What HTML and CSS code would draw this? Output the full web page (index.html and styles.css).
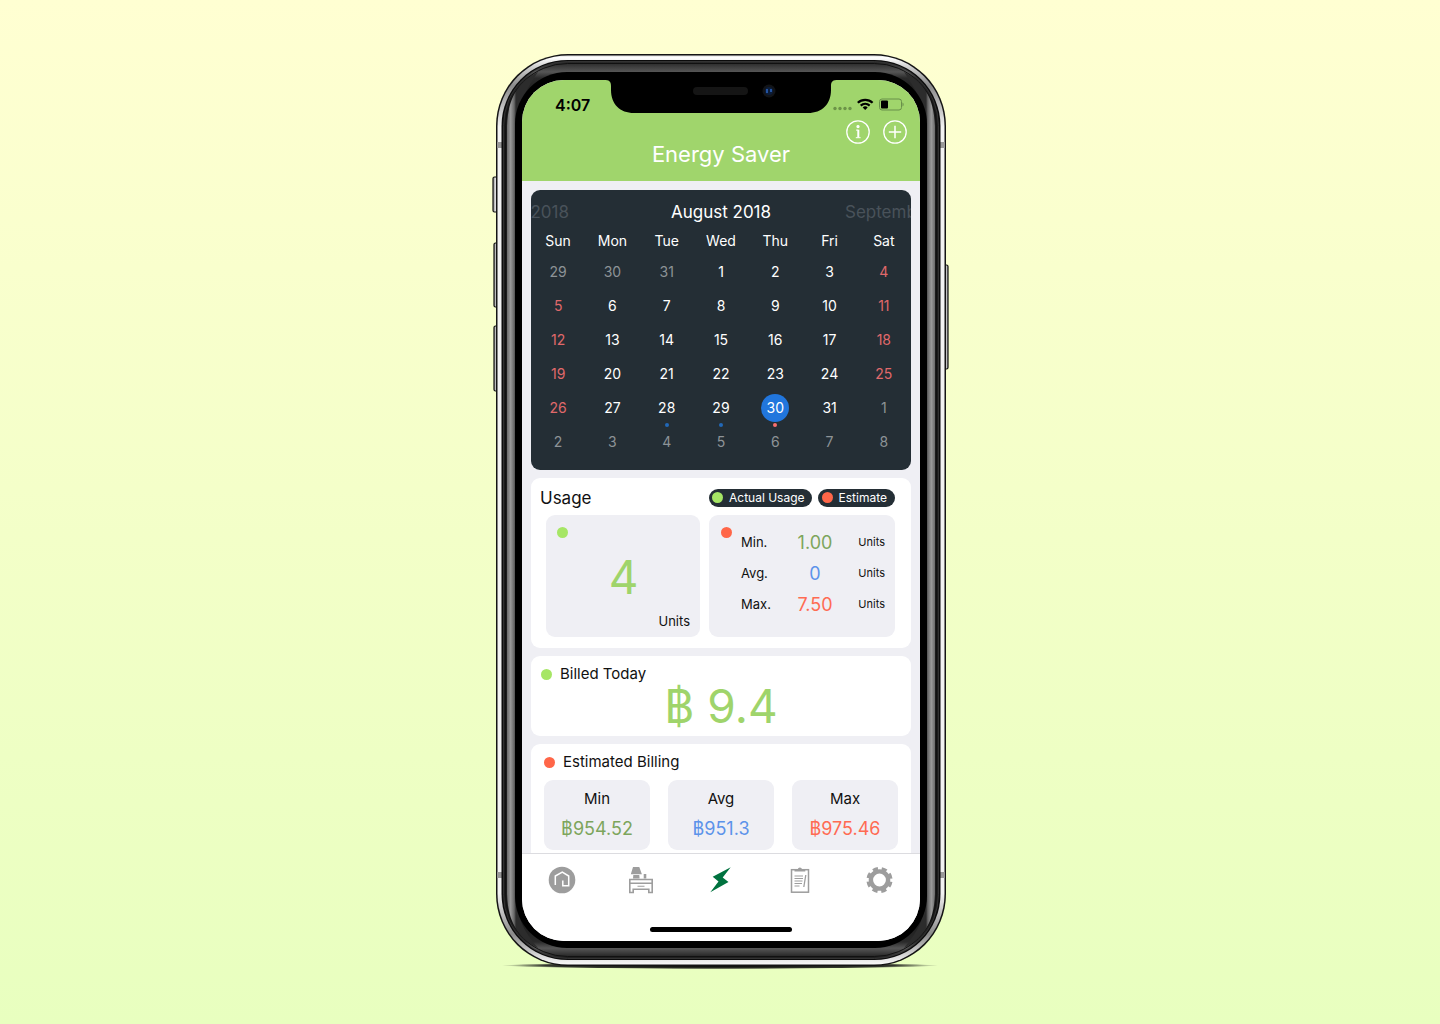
FILE: index.html
```html
<!DOCTYPE html>
<html lang="en">
<head>
<meta charset="utf-8">
<meta name="viewport" content="width=device-width, initial-scale=1">
<title>Energy Saver</title>
<link rel="stylesheet" href="styles.css">
</head>
<body>
<div class="phone">
  <svg class="phone-frame" viewBox="-10 -4 470 924" aria-hidden="true">
    <defs>
      <linearGradient id="sideL" x1="11" x2="20" y1="0" y2="0" gradientUnits="userSpaceOnUse">
        <stop offset="0" stop-color="#6a6a6a"/><stop offset=".4" stop-color="#9a9a9a"/><stop offset=".8" stop-color="#666"/><stop offset="1" stop-color="#2c2c2c"/>
      </linearGradient>
      <linearGradient id="sideR" x1="439" x2="430" y1="0" y2="0" gradientUnits="userSpaceOnUse">
        <stop offset="0" stop-color="#6a6a6a"/><stop offset=".4" stop-color="#9a9a9a"/><stop offset=".8" stop-color="#666"/><stop offset="1" stop-color="#2c2c2c"/>
      </linearGradient>
      <linearGradient id="bezel" x1="0" x2="0" y1="8" y2="904" gradientUnits="userSpaceOnUse">
        <stop offset="0" stop-color="#262626"/><stop offset=".011" stop-color="#565656"/><stop offset=".018" stop-color="#2a2a2a"/><stop offset=".04" stop-color="#1c1c1c"/><stop offset=".96" stop-color="#1c1c1c"/><stop offset=".982" stop-color="#2a2a2a"/><stop offset=".989" stop-color="#585858"/><stop offset="1" stop-color="#1d1d1d"/>
      </linearGradient>
      <linearGradient id="steel" x1="0" x2="0" y1="0" y2="912" gradientUnits="userSpaceOnUse">
        <stop offset="0" stop-color="#c9c9c9"/><stop offset=".004" stop-color="#fff"/><stop offset=".015" stop-color="#ccc"/><stop offset=".035" stop-color="#8a8a8a"/><stop offset=".08" stop-color="#f2f2f2"/><stop offset=".92" stop-color="#f2f2f2"/><stop offset=".965" stop-color="#8a8a8a"/><stop offset=".985" stop-color="#ccc"/><stop offset="1" stop-color="#fff"/>
      </linearGradient>
      <linearGradient id="key" x1="0" x2="1" y1="0" y2="0">
        <stop offset="0" stop-color="#8e8e8e"/><stop offset=".5" stop-color="#ddd"/><stop offset="1" stop-color="#999"/>
      </linearGradient>
      <radialGradient id="ground">
        <stop offset="0" stop-color="#000"/><stop offset=".8" stop-color="#111" stop-opacity=".85"/><stop offset="1" stop-color="#222" stop-opacity="0"/>
      </radialGradient>
    </defs>
    <ellipse cx="224" cy="911.500" rx="218" ry="3.500" fill="url(#ground)"/>
    <g fill="url(#key)" stroke="#111" stroke-width="1.200">
      <rect x="-3" y="123" width="5" height="35" rx="1.500"/>
      <rect x="-2" y="189" width="5" height="64" rx="1.500"/>
      <rect x="-2" y="272" width="5" height="65" rx="1.500"/>
      <rect x="447" y="211" width="5" height="104" rx="1.500"/>
    </g>
    <rect width="450" height="912" rx="72" fill="#141414"/>
    <rect x="1.500" y="1.500" width="447" height="909" rx="70.500" fill="url(#steel)"/>
    <path d="M1 88h5v6H1zM444 88h5v6h-5zM1 818h5v6H1zM444 818h5v6h-5z" fill="#999"/>
    <rect x="5.500" y="6" width="439" height="900" rx="66" fill="#0c0c0c"/>
    <rect x="7.500" y="7.500" width="435" height="897" rx="64" fill="url(#bezel)" stroke="#3a3a3a" stroke-width=".8"/>
    <rect x="9.500" y="9.500" width="431" height="893" rx="62" fill="none" stroke="#111"/>
    <path d="M42 18C24 27 12 42 11 72V840C12 870 24 885 42 894C30 880 20 865 20 838V74C20 55 30 35 42 18Z" fill="url(#sideL)"/>
    <path d="M408 18C426 27 438 42 439 72V840C438 870 426 885 408 894C420 880 430 865 430 838V74C430 55 420 35 408 18Z" fill="url(#sideR)"/>
    <rect x="19" y="18" width="412" height="876" rx="52"/>
  </svg>

  <div class="screen">
    <svg class="notch" viewBox="0 0 240 34" aria-hidden="true">
      <path d="M4 0C9 0 11 1 11 6V10C11 24 20 33 34 33H208C222 33 231 24 231 10V6C231 1 233 0 238 0Z"/>
      <rect x="93" y="7" width="55" height="8" rx="4" fill="#151515"/>
      <circle cx="169" cy="11" r="6.500" fill="#121418"/>
      <circle cx="169" cy="11" r="4" fill="#0b1c38"/>
      <path d="M167 9v4M171 9v3" stroke="#2c66c4" stroke-width="1.500"/>
    </svg>

    <header class="header">
      <div class="status">
        <span class="time">4:07</span>
        <svg class="status-icons" viewBox="0 0 72 16" aria-hidden="true">
          <g fill="#6c9448"><circle cx="3" cy="11.500" r="1.700"/><circle cx="8" cy="11.500" r="1.700"/><circle cx="13" cy="11.500" r="1.700"/><circle cx="18" cy="11.500" r="1.700"/></g>
          <g fill="none" stroke="#000" stroke-width="2.200"><path d="M25.800 5.700a11 11 0 0 1 14.800 0M28.700 8.600a6.800 6.800 0 0 1 9 0"/></g>
          <path d="M33.200 13l-2.500-2.500a3.600 3.600 0 0 1 5 0z"/>
          <rect x="47.500" y="2" width="22" height="11" rx="2.500" fill="none" stroke="#69904a"/>
          <rect x="49" y="3.500" width="7" height="8" rx="1"/>
          <path d="M70.500 5.500c1.500.8 1.500 3.200 0 4z" fill="#69904a"/>
        </svg>
      </div>
      <div class="nav">
        <div class="actions">
          <button class="icon-btn" type="button" aria-label="Information">
            <svg viewBox="0 0 24 24"><circle cx="12" cy="12" r="11.200"/><circle cx="12" cy="6.600" r="1" fill="#fff"/><path d="M12.300 9.800v7.800" stroke-width="2"/><path d="M10 10.100h2.300M9.800 17.700h4.800" stroke-width="1"/></svg>
          </button>
          <button class="icon-btn" type="button" aria-label="Add">
            <svg viewBox="0 0 24 24"><circle cx="12" cy="12" r="11.200"/><path d="M12 5.800v12.400M5.800 12h12.400" stroke-width="1.500"/></svg>
          </button>
        </div>
        <h1 class="title">Energy Saver</h1>
      </div>
    </header>

    <main class="content">
      <section class="calendar">
        <div class="months">
          <button class="month prev" type="button">July 2018</button>
          <h2 class="month current">August 2018</h2>
          <button class="month next" type="button">September 2018</button>
        </div>
        <table class="days">
          <thead>
            <tr><th>Sun</th><th>Mon</th><th>Tue</th><th>Wed</th><th>Thu</th><th>Fri</th><th>Sat</th></tr>
          </thead>
          <tbody>
            <tr><td class="out"><button type="button">29</button></td><td class="out"><button type="button">30</button></td><td class="out"><button type="button">31</button></td><td><button type="button">1</button></td><td><button type="button">2</button></td><td><button type="button">3</button></td><td class="rest"><button type="button">4</button></td></tr>
            <tr><td class="rest"><button type="button">5</button></td><td><button type="button">6</button></td><td><button type="button">7</button></td><td><button type="button">8</button></td><td><button type="button">9</button></td><td><button type="button">10</button></td><td class="rest"><button type="button">11</button></td></tr>
            <tr><td class="rest"><button type="button">12</button></td><td><button type="button">13</button></td><td><button type="button">14</button></td><td><button type="button">15</button></td><td><button type="button">16</button></td><td><button type="button">17</button></td><td class="rest"><button type="button">18</button></td></tr>
            <tr><td class="rest"><button type="button">19</button></td><td><button type="button">20</button></td><td><button type="button">21</button></td><td><button type="button">22</button></td><td><button type="button">23</button></td><td><button type="button">24</button></td><td class="rest"><button type="button">25</button></td></tr>
            <tr><td class="rest"><button type="button">26</button></td><td><button type="button">27</button></td><td class="event"><button type="button">28</button></td><td class="event"><button type="button">29</button></td><td class="event today"><button type="button">30</button></td><td><button type="button">31</button></td><td class="out"><button type="button">1</button></td></tr>
            <tr><td class="out"><button type="button">2</button></td><td class="out"><button type="button">3</button></td><td class="out"><button type="button">4</button></td><td class="out"><button type="button">5</button></td><td class="out"><button type="button">6</button></td><td class="out"><button type="button">7</button></td><td class="out"><button type="button">8</button></td></tr>
          </tbody>
        </table>
      </section>

      <section class="card usage">
        <div class="usage-head">
          <h2 class="usage-title">Usage</h2>
          <div class="legend">
            <span class="pill"><i class="dot green"></i>Actual Usage</span>
            <span class="pill estimate"><i class="dot red"></i>Estimate</span>
          </div>
        </div>
        <div class="usage-boxes">
          <div class="box actual">
            <i class="dot green"></i>
            <strong class="big">4</strong>
            <span class="unit">Units</span>
          </div>
          <div class="box range">
            <i class="dot red"></i>
            <table class="range-table">
              <tr><th>Min.</th><td class="value min">1.00</td><td class="small">Units</td></tr>
              <tr><th>Avg.</th><td class="value avg">0</td><td class="small">Units</td></tr>
              <tr><th>Max.</th><td class="value max">7.50</td><td class="small">Units</td></tr>
            </table>
          </div>
        </div>
      </section>

      <section class="card billed">
        <h2 class="card-title"><i class="dot green"></i>Billed Today</h2>
        <strong class="big">฿ 9.4</strong>
      </section>

      <section class="card estimated">
        <h2 class="card-title"><i class="dot red"></i>Estimated Billing</h2>
        <div class="bills">
          <div class="box bill"><span>Min</span><strong class="value min">฿954.52</strong></div>
          <div class="box bill"><span>Avg</span><strong class="value avg">฿951.3</strong></div>
          <div class="box bill"><span>Max</span><strong class="value max">฿975.46</strong></div>
        </div>
      </section>
    </main>

    <nav class="tabs">
      <div class="tab-row">
        <a class="tab" href="#home" aria-label="Home">
          <svg viewBox="0 0 28 28"><circle cx="14" cy="14" r="13.300" fill="#9d9d9d"/><path d="M7.300 19V10L14.300 6L20.700 10V19.700H14.800V14.500" fill="none" stroke="#fff" stroke-width="1.500"/></svg>
        </a>
        <a class="tab" href="#rooms" aria-label="Rooms">
          <svg viewBox="0 0 28 28" fill="#9d9d9d"><path d="M6 1h6.300l2.600 7.300H3.800zM6.300 9h6l.3 3.500H6zM16.700 8h2.600v4.500h-2.600z"/><path d="M2.800 13.500h22.400v13h-3.400v-3.300H6.200v3.300H2.800zM2.800 17.300h22.400" fill="none" stroke="#9d9d9d" stroke-width="1.600"/><path d="M10.500 20.200h7" stroke="#9d9d9d" stroke-width="1.100"/></svg>
        </a>
        <a class="tab" href="#energy" aria-label="Energy" aria-current="page">
          <svg viewBox="0 0 28 28"><path d="M23.700 1.300L5.700 10.700L11.500 15.500L3.300 26.200L21.500 15.900L15.700 11.600Z" fill="#00723f"/></svg>
        </a>
        <a class="tab" href="#reports" aria-label="Reports">
          <svg viewBox="0 0 28 28" fill="none" stroke="#9d9d9d"><rect x="4.500" y="3.700" width="17" height="22.500" stroke-width="1.500"/><path d="M7.500 5.500V3.200h3.200a2.300 2.300 0 0 1 4.400 0h3.200v2.300z" fill="#9d9d9d" stroke="none"/><path d="M7.500 10h8.500M7.500 12.500h8.500M7.500 15h8M7.500 17.500h7.500M7.500 20h5" stroke-width="1"/><path d="M18.800 9l-2 12" stroke-width="1.300"/></svg>
        </a>
        <a class="tab" href="#settings" aria-label="Settings">
          <svg viewBox="0 0 28 28"><g fill="none" stroke="#9d9d9d"><circle cx="13.500" cy="14" r="8.600" stroke-width="4.400"/><circle cx="13.500" cy="14" r="11.500" stroke-width="3.200" stroke-dasharray="5.200 3.832" stroke-dashoffset="-1.900"/></g></svg>
        </a>
      </div>
      <div class="home-bar"></div>
    </nav>
  </div>
</div>
</body>
</html>
```

FILE: styles.css
```css
* {
  box-sizing: border-box;
}

body {
  margin: 0;
  min-height: 100vh;
  padding: 54px 0 54px 2px;
  display: flex;
  justify-content: center;
  align-items: flex-start;
  background: linear-gradient(180deg, #ffffd2, #e8ffbf);
  font-family: Inter, "Liberation Sans", sans-serif;
  color: #111;
}

h1,
h2 {
  margin: 0;
  font-weight: 400;
}

strong {
  font-weight: 400;
}

button {
  padding: 0;
  border: 0;
  background: none;
  font: inherit;
  color: inherit;
  cursor: pointer;
}

/* Device */
.phone {
  position: relative;
  width: 450px;
  padding: 26px 26px 25px;
}

.phone-frame {
  position: absolute;
  top: -4px;
  left: -10px;
  width: 470px;
  height: 924px;
}

.screen {
  position: relative;
  overflow: hidden;
  border-radius: 42px;
  background: #efeff4;
}

.notch {
  position: absolute;
  top: 0;
  left: 78px;
  width: 240px;
  height: 34px;
}

/* Header */
.header {
  background: #a0d56c;
}

.status {
  display: flex;
  justify-content: space-between;
  align-items: center;
  padding: 15px 16px 0 33px;
  height: 35px;
}

.time {
  font-size: 16px;
  line-height: 20px;
  font-weight: 600;
  color: #000;
}

.status-icons {
  width: 72px;
  height: 16px;
}

.nav {
  display: grid;
}

.nav > * {
  grid-area: 1 / 1;
}

.actions {
  display: flex;
  justify-content: flex-end;
  gap: 13px;
  padding: 5px 13px 0 0;
  height: 29px;
}

.icon-btn {
  width: 24px;
  height: 24px;
}

.icon-btn svg {
  display: block;
  fill: none;
  stroke: #fff;
  stroke-width: 1.3;
}

.title {
  padding: 25px 0 13px;
  font-size: 22px;
  line-height: 28px;
  text-align: center;
  color: #fff;
}

/* Content */
.content {
  display: flex;
  flex-direction: column;
  gap: 8px;
  padding: 9px 9px 0;
}

.calendar {
  overflow: hidden;
  padding: 7px 0 11px;
  border-radius: 9px;
  background: #242e35;
  color: #fff;
}

.months {
  display: grid;
  grid-template-columns: 66px 1fr 66px;
}

.month {
  display: flex;
  overflow: hidden;
  white-space: nowrap;
  font-size: 17px;
  line-height: 30px;
  color: #49525a;
}

.prev {
  justify-content: flex-end;
  padding-right: 28px;
}

.current {
  justify-content: center;
  color: #fff;
}

.days {
  width: 100%;
  table-layout: fixed;
  border-collapse: collapse;
  font-size: 14px;
  text-align: center;
}

.days th {
  height: 28px;
  padding: 0 0 2px;
  font-weight: 400;
}

.days td {
  position: relative;
  height: 34px;
  padding: 0;
}

.days td button {
  width: 28px;
  height: 28px;
  border-radius: 14px;
  line-height: 28px;
}

.days .out {
  color: #8d9397;
}

.days .rest {
  color: #e0696b;
}

.today button {
  background: #2176dd;
}

.event::after {
  content: "";
  position: absolute;
  left: calc(50% - 2px);
  bottom: -2px;
  width: 4px;
  height: 4px;
  border-radius: 2px;
  background: #2268b8;
}

.today::after {
  background: #fa6e6e;
}

.card {
  border-radius: 9px;
  background: #fff;
}

.box {
  border-radius: 9px;
  background: #efeff4;
}

.dot {
  flex: none;
  width: 11px;
  height: 11px;
  border-radius: 6px;
}

.green {
  background: #a6e665;
}

.red {
  background: #ff6648;
}

.big {
  font-size: 46px;
  line-height: 56px;
  color: #9fd46b;
}

.value {
  font-size: 18px;
}

.min {
  color: #7da55c;
}

.avg {
  color: #5c93ea;
}

.max {
  color: #ff6b52;
}

/* Usage */
.usage {
  padding: 0 16px 11px 15px;
}

.usage-head {
  display: flex;
  justify-content: space-between;
  align-items: center;
  height: 37px;
  padding-top: 2px;
}

.usage-title {
  margin-left: -6px;
  font-size: 17px;
  line-height: 24px;
}

.legend {
  display: flex;
  gap: 6px;
}

.pill {
  display: flex;
  align-items: center;
  gap: 6px;
  height: 18px;
  padding: 0 7px 0 3px;
  border-radius: 9px;
  background: #242e35;
  font-size: 12px;
  line-height: 18px;
  color: #fff;
}

.estimate {
  padding: 0 8px 0 4px;
}

.usage-boxes {
  display: grid;
  grid-template-columns: 154fr 186fr;
  gap: 9px;
}

.actual {
  display: flex;
  flex-direction: column;
  padding: 12px 10px 5px 11px;
}

.actual .big {
  margin: 11px 0 5px;
  text-align: center;
}

.unit {
  font-size: 13px;
  line-height: 22px;
  text-align: right;
}

.range {
  display: flex;
  gap: 9px;
  padding: 12px 10px 5px 12px;
}

.range-table {
  flex: 1;
  border-collapse: collapse;
  align-self: flex-start;
  line-height: 31px;
}

.range-table th,
.range-table td {
  padding: 0;
}

.range-table th {
  width: 44px;
  font-size: 13px;
  font-weight: 400;
  text-align: left;
}

.range-table .value {
  text-align: center;
}

.range-table .small {
  width: 40px;
  font-size: 11px;
  text-align: right;
}

/* Billing */
.card-title {
  display: flex;
  align-items: center;
  gap: 8px;
  font-size: 15px;
  line-height: 20px;
}

.billed {
  display: flex;
  flex-direction: column;
  padding: 8px 10px 2px;
}

.billed .big {
  margin-top: -6px;
  text-align: center;
}

.estimated {
  padding: 8px 13px 3px;
  border-radius: 9px 9px 0 0;
}

.bills {
  display: grid;
  grid-template-columns: repeat(3, 1fr);
  gap: 18px;
  padding-top: 8px;
}

.bill {
  display: flex;
  flex-direction: column;
  align-items: center;
  gap: 3px;
  padding: 6px 0;
  font-size: 15px;
  line-height: 25px;
}

.bill .value {
  line-height: 30px;
}

/* Tab bar */
.tabs {
  padding: 12px 0 9px;
  border-top: 1px solid #dcdce0;
  background: #fff;
}

.tab-row {
  display: grid;
  grid-template-columns: repeat(5, 1fr);
  justify-items: center;
}

.tab svg {
  display: block;
  width: 28px;
  height: 28px;
}

.home-bar {
  width: 142px;
  height: 5px;
  margin: 33px auto 0;
  border-radius: 3px;
  background: #000;
}
```
